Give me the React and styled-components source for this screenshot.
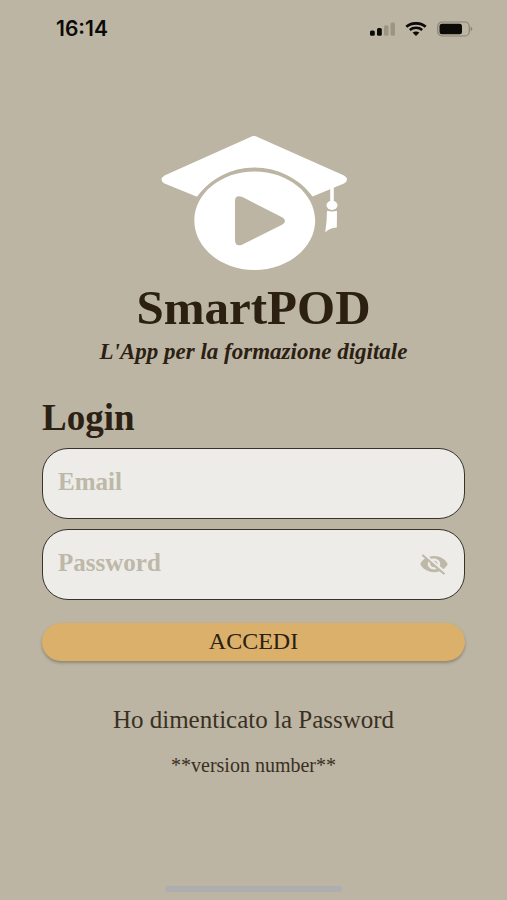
import React, { useState } from "react";
import styled, { createGlobalStyle } from "styled-components";

const GlobalStyle = createGlobalStyle`
  *, *::before, *::after { box-sizing: border-box; }
  body {
    margin: 0;
    background: #bcb5a4;
    color: #2b2012;
    font-family: "Liberation Serif", "Times New Roman", serif;
  }
`;

const Screen = styled.div`
  display: flex;
  flex-direction: column;
  min-height: 100vh;
`;

const StatusBar = styled.header`
  display: flex;
  align-items: center;
  justify-content: space-between;
  height: 58px;
  padding: 0 34px 0 56px;
  color: #0b0a07;
`;

const Time = styled.time`
  font: 600 21px/24px Inter, "Liberation Sans", sans-serif;
`;

const StatusIcons = styled.div`
  display: flex;
  align-items: center;
  gap: 10px;
`;

const Content = styled.main`
  display: flex;
  flex-direction: column;
  padding: 76px 42px 0;
`;

const Brand = styled.section`
  display: flex;
  flex-direction: column;
  align-items: center;
  text-align: center;
`;

const Title = styled.h1`
  margin: 8px 0 0;
  font-size: 49px;
  line-height: 56px;
  font-weight: 700;
`;

const Tagline = styled.p`
  margin: 0;
  font-size: 23px;
  line-height: 32px;
  font-weight: 700;
  font-style: italic;
`;

const LoginForm = styled.form`
  display: flex;
  flex-direction: column;
  margin-top: 28px;
`;

const Heading = styled.h2`
  margin: 0 0 8px;
  font-size: 37px;
  line-height: 44px;
  font-weight: 700;
`;

const Field = styled.div`
  display: flex;
  align-items: center;
  height: 71px;
  margin-bottom: 10px;
  padding: 0 15px;
  border: 1px solid #37332a;
  border-radius: 26px;
  background: #edece8;
`;

const TextInput = styled.input`
  flex: 1;
  min-width: 0;
  height: 100%;
  padding: 0 0 4px;
  border: 0;
  outline: 0;
  background: transparent;
  color: inherit;
  font: 700 25px "Liberation Serif", "Times New Roman", serif;

  &::placeholder {
    color: #bdb8a8;
    opacity: 1;
  }
`;

const IconButton = styled.button`
  display: flex;
  padding: 0 0 2px;
  border: 0;
  background: transparent;
  color: #bdb8a8;
  cursor: pointer;
`;

const SubmitButton = styled.button`
  height: 38px;
  margin-top: 13px;
  padding: 0 16px 2px;
  border: 0;
  border-radius: 19px;
  background: #dab06b;
  box-shadow: 0 2px 3px rgba(60, 50, 30, 0.35);
  color: #2b2012;
  font: 24px/36px "Liberation Serif", "Times New Roman", serif;
  cursor: pointer;
`;

const ForgotLink = styled.a`
  align-self: center;
  margin-top: 43px;
  color: #3a3022;
  font-size: 25px;
  line-height: 32px;
  text-decoration: none;
`;

const Version = styled.p`
  margin: 17px 0 24px;
  color: #3a3022;
  font-size: 20px;
  line-height: 24px;
  text-align: center;
`;

const HomeIndicator = styled.div`
  align-self: center;
  width: 35%;
  height: 6px;
  margin: auto 0 8px;
  border-radius: 3px;
  background: #aeadb0;
`;

function SignalIcon() {
  return (
    <svg width="26" height="14" viewBox="0 0 26 14" aria-hidden="true">
      <rect x="1" y="8.500" width="4.800" height="5.200" rx="1.500" fill="#0b0a07" />
      <rect x="8" y="6" width="4.800" height="7.700" rx="1.500" fill="#0b0a07" />
      <rect x="15" y="3.200" width="4.500" height="10.500" rx="1.500" fill="#9b9586" />
      <rect x="21.500" y=".5" width="4.500" height="13.200" rx="1.500" fill="#9b9586" />
    </svg>
  );
}

function WifiIcon() {
  return (
    <svg width="22" height="14" viewBox="0 0 22 14" fill="none" stroke="#0b0a07" aria-hidden="true">
      <path d="M1.300 4.700C6.700.2 15.300.2 20.700 4.700" strokeWidth="2.700" />
      <path d="M4.800 8C8.300 5.100 13.700 5.100 17.200 8" strokeWidth="2.500" />
      <path d="M7.600 10.600C9.500 9 12.500 9 14.400 10.600L11 14Z" fill="#0b0a07" stroke="none" />
    </svg>
  );
}

function BatteryIcon() {
  return (
    <svg width="36" height="16" viewBox="0 0 36 16" aria-hidden="true">
      <rect x=".7" y="1" width="31.600" height="14" rx="4.500" fill="none" stroke="#898374" strokeWidth="1.200" />
      <rect x="2.500" y="2.800" width="22.500" height="10.400" rx="2.500" fill="#0b0a07" />
      <path d="M33.700 5.800C35.800 6.500 35.800 9.500 33.700 10.200Z" fill="#898374" />
    </svg>
  );
}

function Logo() {
  return (
    <svg width="188" height="138" viewBox="160 134 188 138" role="img" aria-label="SmartPOD">
      <path
        d="M250 137.200Q254 134.800 258 137.200L344 175.500Q350 179.500 344 183.500L312.500 196.500C300 179 278 167.500 254.500 167.500S210 179 197 196.800L164.500 183.500Q158.500 179.500 164.500 175.500Z"
        fill="#fff"
      />
      <path
        fill="#fff"
        fillRule="evenodd"
        d="M254.500 171.500C288 171.500 315.200 193.500 315.200 220.500S288 270 254.500 270S194.300 247.500 194.300 220.500S221 171.500 254.500 171.500ZM235 201V240Q235 247 242 244.700L282.500 224.500Q287.500 221 282.500 217.500L242 196.800Q235 194.500 235 201Z"
      />
      <path d="M330.200 185H333.800V201H330.200Z" fill="#fff" />
      <ellipse cx="332" cy="205.300" rx="5.500" ry="4.600" fill="#fff" />
      <path d="M327 210.800Q332 212.300 337 210.800L336.800 227.500Q329 228.200 325.200 232.500Q327 221 327 210.800Z" fill="#fff" />
    </svg>
  );
}

function VisibilityOffIcon() {
  return (
    <svg width="30" height="26" viewBox="0 0 24 24" preserveAspectRatio="none" fill="currentColor" aria-hidden="true">
      <path d="M12 7c2.760 0 5 2.240 5 5 0 .65-.13 1.260-.36 1.830l2.920 2.920c1.510-1.260 2.700-2.890 3.430-4.750-1.730-4.390-6-7.500-11-7.500-1.400 0-2.740.25-3.980.7l2.160 2.160C10.740 7.130 11.350 7 12 7zM2 4.270l2.280 2.280.46.46C3.080 8.300 1.780 10.020 1 12c1.730 4.390 6 7.500 11 7.500 1.550 0 3.030-.3 4.380-.84l.42.42L19.730 22 21 20.730 3.270 3 2 4.270zM7.530 9.800l1.550 1.550c-.05.21-.08.43-.08.65 0 1.660 1.340 3 3 3 .22 0 .44-.03.65-.08l1.550 1.550c-.67.33-1.410.53-2.200.53-2.760 0-5-2.240-5-5 0-.79.2-1.530.53-2.200zm4.310-.78l3.150 3.150.02-.16c0-1.660-1.340-3-3-3l-.17.010z" />
    </svg>
  );
}

export default function App() {
  const [passwordVisible, setPasswordVisible] = useState(false);

  return (
    <Screen>
      <GlobalStyle />
      <StatusBar>
        <Time>16:14</Time>
        <StatusIcons>
          <SignalIcon />
          <WifiIcon />
          <BatteryIcon />
        </StatusIcons>
      </StatusBar>
      <Content>
        <Brand>
          <Logo />
          <Title>SmartPOD</Title>
          <Tagline>L'App per la formazione digitale</Tagline>
        </Brand>
        <LoginForm onSubmit={(event) => event.preventDefault()}>
          <Heading>Login</Heading>
          <Field>
            <TextInput type="email" aria-label="Email" placeholder="Email" />
          </Field>
          <Field>
            <TextInput
              type={passwordVisible ? "text" : "password"}
              aria-label="Password"
              placeholder="Password"
            />
            <IconButton
              type="button"
              aria-label="Mostra password"
              aria-pressed={passwordVisible}
              onClick={() => setPasswordVisible(!passwordVisible)}
            >
              <VisibilityOffIcon />
            </IconButton>
          </Field>
          <SubmitButton type="submit">ACCEDI</SubmitButton>
        </LoginForm>
        <ForgotLink href="#password">Ho dimenticato la Password</ForgotLink>
        <Version>**version number**</Version>
      </Content>
      <HomeIndicator />
    </Screen>
  );
}
